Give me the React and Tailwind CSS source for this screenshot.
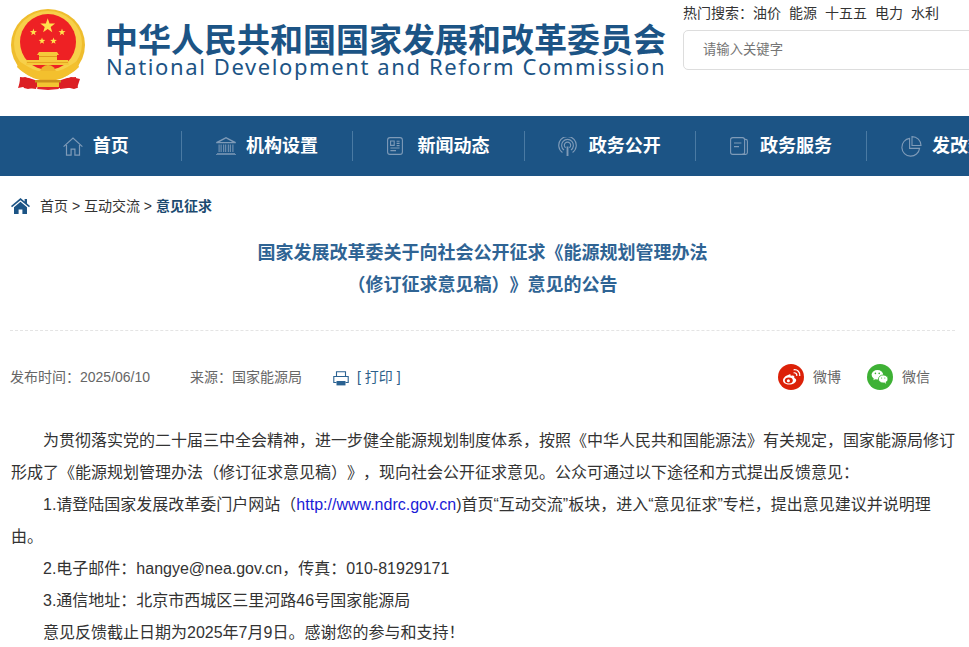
import React from "react";

const cjk = '"Liberation Sans","Noto Sans CJK SC",sans-serif';

function Star({ cx, cy, r, fill = "#ffe14d" }) {
  const pts = [];
  for (let i = 0; i < 10; i++) {
    const rad = i % 2 === 0 ? r : r * 0.4;
    const a = -Math.PI / 2 + (i * Math.PI) / 5;
    pts.push(`${(cx + rad * Math.cos(a)).toFixed(2)},${(cy + rad * Math.sin(a)).toFixed(2)}`);
  }
  return <polygon points={pts.join(" ")} fill={fill} />;
}

function Emblem() {
  return (
    <svg width="74" height="81" viewBox="0 0 74 81" className="shrink-0">
      <ellipse cx="37" cy="36" rx="37" ry="36" fill="#efbd2d" />
      <ellipse cx="37" cy="34.5" rx="34" ry="32.5" fill="#f7d04a" />
      <circle cx="37" cy="33" r="28" fill="#ee2124" />
      <Star cx={36.7} cy={17} r={7.8} />
      <Star cx={22.4} cy={23.3} r={3.7} />
      <Star cx={51} cy={23.3} r={3.7} />
      <Star cx={31} cy={32} r={3.5} />
      <Star cx={42.5} cy={32} r={3.5} />
      <path d="M28 43h18l2 3h-2v5h11l1 5H15l1-5h12v-5h-2z" fill="#f5c93a" />
      <rect x="28" y="47" width="18" height="1" fill="#e09a1c" />
      <rect x="16" y="53" width="41" height="1" fill="#e5a523" />
      <path d="M60 68c-8 4-15 6-20 6h-3c-8 0-17-3-23-6l-5 2 4 9 4 1 8-2 3 1h24l3-1 8 2 3-1 3-9z" fill="#d81e22" />
      <path d="M9 68c0 5-1 8-2 11l5-1 5 1 8 1 2-8-9-3z" fill="#dc2024" />
      <path d="M65 68c0 5 1 8 2 11l-5-1-5 1-8 1-2-8 9-3z" fill="#dc2024" />
      <path d="M26 73h22v5H26z" fill="#f3c531" />
      <path d="M27 78h20l1 2-11 1-11-1z" fill="#e2252a" />
      <path d="M29 64a8 8 0 0 1 16 0v8H29z" fill="#eeb52b" />
      <path d="M8 52c6 4 12 8 19 10h20c7-2 13-6 19-10l2 6c-6 6-14 10-21 12H27C20 68 12 64 6 58z" fill="#f3c02e" />
      <path d="M24 71h26v2.5H24z" fill="#c9901b" />
    </svg>
  );
}

const S = "#7f9bb8";

const icons = {
  home: (
    <svg width="20" height="19" viewBox="0 0 20 19" fill="none" stroke={S} strokeWidth="1.2">
      <path d="M.6 9.6 10 1l9.4 8.6M3.5 8v10.2h4.6v-6h3.8v6h4.6V8" />
    </svg>
  ),
  bank: (
    <svg width="20" height="18" viewBox="0 0 20 18" fill={S}>
      <path d="M10 0 .2 5v1.2h19.6V5zM10 1.4 3.6 5h12.8z" fillRule="evenodd" />
      <path d="M2.6 7.4h1v7.6h-1zM4.6 7.4h1v7.6h-1zM7.2 7.4h1v7.6h-1zM9.2 7.4h1v7.6h-1zM11.8 7.4h1v7.6h-1zM13.8 7.4h1v7.6h-1zM16.4 7.4h1v7.6h-1z" />
      <path d="M1 16h18v.7H1zM0 17.3h20v.7H0z" />
    </svg>
  ),
  news: (
    <svg width="16" height="18" viewBox="0 0 16 18" fill="none" stroke={S} strokeWidth="1.1">
      <rect x=".6" y=".6" width="14.8" height="16.8" rx="2.4" />
      <path d="M3.6 4h3.6v4.4H3.6zM9.6 4.2h3M9.6 6.4h3M9.6 8.6h3M3.4 11h9.2M3.4 13.6h5.6" />
    </svg>
  ),
  signal: (
    <svg width="19" height="19" viewBox="0 0 18 18" fill="none" stroke={S} strokeWidth="1.1" className="ml-[-1px]">
      <path d="M4.2 14.6a8.3 8.3 0 1 1 9.6 0" />
      <path d="M5.7 12.4a5.6 5.6 0 1 1 6.6 0" />
      <path d="M7.2 10.2a3 3 0 1 1 3.6 0" />
      <path d="M9 9v9" strokeWidth="1.8" />
    </svg>
  ),
  book: (
    <svg width="18" height="18" viewBox="0 0 18 18" fill="none" stroke={S} strokeWidth="1.1">
      <rect x=".6" y=".6" width="14" height="16.8" rx="2.2" />
      <path d="M15 2.4h.6a1.8 1.8 0 0 1 1.8 1.8v11.4a1.8 1.8 0 0 1-1.8 1.8H12M4 6h7.4M4 9.6h5" />
    </svg>
  ),
  pie: (
    <svg width="21" height="21" viewBox="0 0 21 21" fill="none" stroke={S} strokeWidth="1.1" className="ml-[-1px]">
      <path d="M8.6 2.4a8.9 8.9 0 1 0 10 10h-10z" />
      <path d="M11 .6v8.9h9A9 9 0 0 0 11 .6z" />
    </svg>
  ),
};

const nav = [
  ["首页", "home"],
  ["机构设置", "bank"],
  ["新闻动态", "news"],
  ["政务公开", "signal"],
  ["政务服务", "book"],
  ["发改数据", "pie"],
];

const hot = ["油价", "能源", "十五五", "电力", "水利"];

export default function App() {
  return (
    <div className="w-[969px] h-[647px] overflow-hidden bg-white [text-spacing-trim:space-all]" style={{ fontFamily: cjk }}>
      <header className="flex h-[116px] pl-[11px]">
        <div className="pt-[9px]"><Emblem /></div>
        <div className="ml-[20px] w-[578px] shrink-0 pt-[22px]">
          <div className="text-[33px] leading-[38px] font-bold text-[#1c5485] whitespace-nowrap">中华人民共和国国家发展和改革委员会</div>
          <div className="text-[22px] leading-[22px] tracking-[1.6px] text-[#1c5485] whitespace-nowrap ml-[1px] mt-[-5px]" style={{ fontFamily: '"Noto Sans",sans-serif' }}>National Development and Reform Commission</div>
        </div>
        <div className="w-[320px] shrink-0">
          <div className="flex items-center text-[14px] leading-[16px] mt-[5px] text-[#333] whitespace-nowrap">
            <span>热门搜索：</span>
            <span className="flex gap-[8px]">{hot.map((h) => <span key={h}>{h}</span>)}</span>
          </div>
          <div className="mt-[9px] h-[40px] w-[320px] border border-[#ddd] rounded-[5px] flex items-center pl-[19px] text-[13.33px] text-[#757575]">请输入关键字</div>
        </div>
      </header>

      <nav className="h-[60px] bg-[#1c5485] flex items-center pl-[10.6px] w-[1100px]">
        {nav.map(([t, ic], i) => (
          <div key={t} className={`w-[171.33px] h-[30px] shrink-0 flex items-center justify-center gap-[10px] ${i < nav.length - 1 ? "border-r border-[#4a7aa3]" : ""}`}>
            <span className="w-[20px] flex justify-start">{icons[ic]}</span>
            <span className="text-[18px] font-bold text-white leading-[30px]">{t}</span>
          </div>
        ))}
      </nav>

      <div className="flex items-center h-[20px] mt-[20px] pl-[11px] text-[14px] text-[#333] whitespace-pre">
        <svg width="19" height="16" viewBox="0 0 19 16" fill="#1c5485" className="mr-[10px]">
          <path d="M9.5 0 0 8l1 1.3L9.5 2.2 18 9.3 19 8l-3-2.5V1h-2.4v2.5z" />
          <path d="M9.5 3.8 3 9.2V16h4.6v-4.6h3.8V16H16V9.2z" />
        </svg>
        <span>首页 &gt; 互动交流 &gt; </span>
        <span className="font-bold text-[#1c4a70]">意见征求</span>
      </div>

      <div className="mx-[10px] w-[945px] pt-[21px]">
        <h1 className="text-[18px] leading-[32px] font-bold text-[#2f6494] text-center">
          国家发展改革委关于向社会公开征求《能源规划管理办法<br />（修订征求意见稿）》意见的公告
        </h1>
        <div className="mt-[29px] border-t border-dashed border-[#e4e4e4]" />

        <div className="flex items-center h-[30px] mt-[31px] text-[14px] text-[#666] whitespace-nowrap">
          <span>发布时间：2025/06/10</span>
          <span className="ml-[40px]">来源：国家能源局</span>
          <svg width="16" height="15" viewBox="0 0 16 15" fill="none" stroke="#2a6292" strokeWidth="1.1" className="ml-[31px] mt-[3px]">
            <path d="M3.5 5.5V.7h9v4.8" />
            <path d="M3.5 11.5H.8V5.5h14.4v6h-2.7" />
            <rect x="3.5" y="10" width="9" height="4.4" fill="#2a6292" stroke="none" />
          </svg>
          <span className="ml-[8px] text-[#2c5f8a]">[ 打印 ]</span>
          <span className="flex-1" />
          <svg width="26" height="26" viewBox="0 0 26 26">
            <circle cx="13" cy="13" r="13" fill="#dc2108" />
            <path d="M11.2 10.6c-3.2.8-6.2 3.4-6.2 6 0 2.4 2.8 4 6.2 4 4 0 7-2.2 7-4.4 0-1.4-1.2-2-2-2.2.6-1.4 0-2.6-1.6-2.6-1 0-2 .4-2 .4.2-1 0-2.2-1.4-1.2z" fill="#fff" />
            <ellipse cx="10.8" cy="16.6" rx="4" ry="3" fill="#dc2108" />
            <circle cx="10.4" cy="16.8" r="1.5" fill="#fff" />
            <path d="M15.6 8.8c2-.4 3.6 1.2 3.2 3.2M15.6 5.8c3.8-.6 6.8 2.4 6.2 6.2" fill="none" stroke="#fff" strokeWidth="1.2" />
          </svg>
          <span className="ml-[9px] w-[54px]">微博</span>
          <svg width="26" height="26" viewBox="0 0 26 26">
            <circle cx="13" cy="13" r="13" fill="#3eb135" />
            <ellipse cx="10.4" cy="10.8" rx="5.8" ry="4.8" fill="#fff" />
            <path d="M7 14l-.6 2.2 2.6-1.4z" fill="#fff" />
            <ellipse cx="16.2" cy="15" rx="4.8" ry="4" fill="#fff" stroke="#3eb135" strokeWidth=".8" />
            <path d="M18.6 18l.6 1.8-2.2-1.2z" fill="#fff" />
            <circle cx="8.4" cy="9.4" r=".8" fill="#3eb135" />
            <circle cx="12.2" cy="9.4" r=".8" fill="#3eb135" />
            <circle cx="14.6" cy="14" r=".6" fill="#3eb135" />
            <circle cx="17.8" cy="14" r=".6" fill="#3eb135" />
          </svg>
          <span className="ml-[9px] w-[53px]">微信</span>
        </div>

        <div className="mt-[33px] ml-[1px] text-[16px] leading-[32px] text-[#333] [&>p]:indent-[32px]">
          <p>为贯彻落实党的二十届三中全会精神，进一步健全能源规划制度体系，按照《中华人民共和国能源法》有关规定，国家能源局修订形成了《能源规划管理办法（修订征求意见稿）》，现向社会公开征求意见。公众可通过以下途径和方式提出反馈意见：</p>
          <p>1.请登陆国家发展改革委门户网站（<span className="text-[#1a1ad6]">http://www.ndrc.gov.cn</span>)首页“互动交流”板块，进入“意见征求”专栏，提出意见建议并说明理由。</p>
          <p>2.电子邮件：hangye@nea.gov.cn，传真：010-81929171</p>
          <p>3.通信地址：北京市西城区三里河路46号国家能源局</p>
          <p>意见反馈截止日期为2025年7月9日。感谢您的参与和支持！</p>
        </div>
      </div>
    </div>
  );
}
